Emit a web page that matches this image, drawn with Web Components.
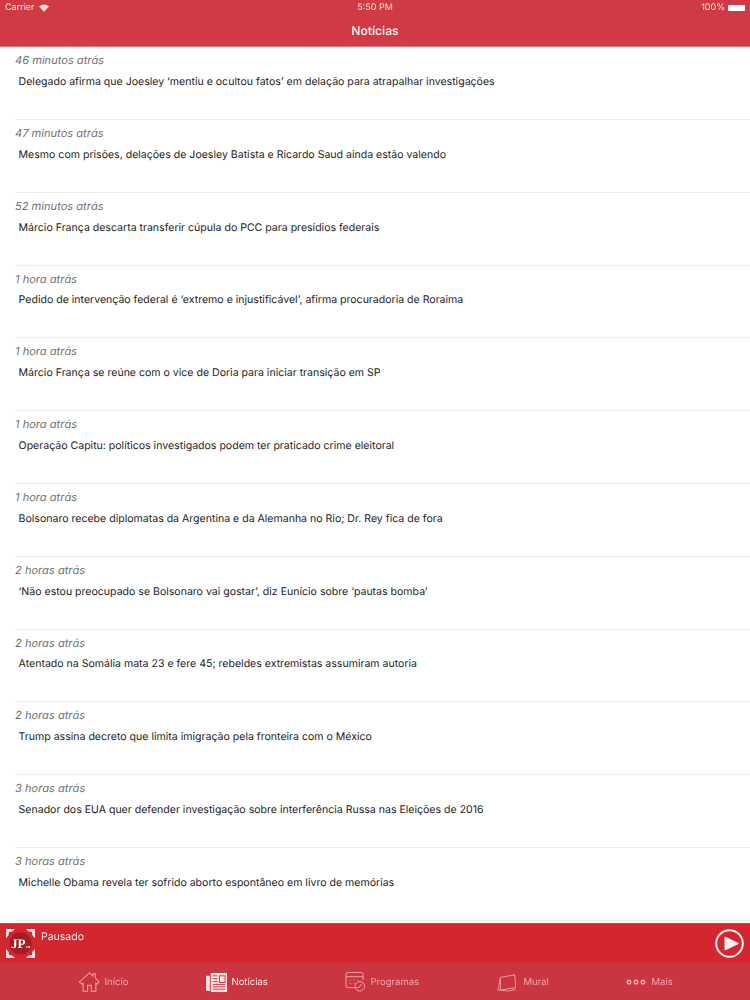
<!DOCTYPE html>
<html lang="pt">
<head>
<meta charset="utf-8">
<title>Notícias</title>
<style>
html, body { margin: 0; padding: 0; height: 100%; }
body { font-family: "Inter", "Liberation Sans", sans-serif; background: #fff; overflow: hidden; text-rendering: geometricPrecision; }
app-shell { height: 1000px; }
</style>
</head>
<body>
<app-shell>
  <top-bar slot="top" title="Notícias"></top-bar>
  <news-list slot="main">
    <news-row time="46 minutos atrás">Delegado afirma que Joesley ‘mentiu e ocultou fatos’ em delação para atrapalhar investigações</news-row>
    <news-row time="47 minutos atrás">Mesmo com prisões, delações de Joesley Batista e Ricardo Saud ainda estão valendo</news-row>
    <news-row time="52 minutos atrás">Márcio França descarta transferir cúpula do PCC para presídios federais</news-row>
    <news-row time="1 hora atrás">Pedido de intervenção federal é ‘extremo e injustificável’, afirma procuradoria de Roraima</news-row>
    <news-row time="1 hora atrás">Márcio França se reúne com o vice de Doria para iniciar transição em SP</news-row>
    <news-row time="1 hora atrás">Operação Capitu: políticos investigados podem ter praticado crime eleitoral</news-row>
    <news-row time="1 hora atrás">Bolsonaro recebe diplomatas da Argentina e da Alemanha no Rio; Dr. Rey fica de fora</news-row>
    <news-row time="2 horas atrás">‘Não estou preocupado se Bolsonaro vai gostar’, diz Eunício sobre ‘pautas bomba’</news-row>
    <news-row time="2 horas atrás">Atentado na Somália mata 23 e fere 45; rebeldes extremistas assumiram autoria</news-row>
    <news-row time="2 horas atrás">Trump assina decreto que limita imigração pela fronteira com o México</news-row>
    <news-row time="3 horas atrás">Senador dos EUA quer defender investigação sobre interferência Russa nas Eleições de 2016</news-row>
    <news-row time="3 horas atrás">Michelle Obama revela ter sofrido aborto espontâneo em livro de memórias</news-row>
  </news-list>
  <audio-player slot="bottom" status="Pausado"></audio-player>
  <tab-bar slot="bottom">
    <tab-item label="Início" icon="home"></tab-item>
    <tab-item label="Notícias" icon="news" active></tab-item>
    <tab-item label="Programas" icon="shows"></tab-item>
    <tab-item label="Mural" icon="board"></tab-item>
    <tab-item label="Mais" icon="more"></tab-item>
  </tab-bar>
</app-shell>

<script>
class AppShell extends HTMLElement {
    constructor() {
        super();
        this.attachShadow({ mode: 'open' });
        this.shadowRoot.innerHTML = `
        <style>
            :host { display: flex; flex-direction: column; width: 750px; filter: blur(0.35px); }
            main { flex: 1; min-height: 0; overflow: hidden; }
        </style>
        <slot name="top"></slot>
        <main><slot name="main"></slot></main>
        <slot name="bottom"></slot>
        `;
    }
}

class TopBar extends HTMLElement {
    constructor() {
        super();
        this.attachShadow({ mode: 'open' });
        this.shadowRoot.innerHTML = `
        <style>
            :host { display: block; height: 47px; background: #cf3a44; color: #fff; box-sizing: border-box; border-bottom: 1px solid #e5797f; }
            .status { height: 15px; padding: 0 5px; display: grid; grid-template-columns: 1fr auto 1fr; align-items: center; font-size: 9px; color: #f6dcde; }
            .left { display: flex; align-items: center; gap: 4px; }
            .right { display: flex; align-items: center; justify-content: flex-end; gap: 3px; }
            .battery { width: 17px; height: 6px; background: #fff; border-radius: 1px; }
            h1 { margin: 0; padding-top: 1px; text-align: center; font-size: 12px; line-height: 30px; font-weight: 600; color: #f9e9ea; }
        </style>
        <div class="status">
            <div class="left">Carrier
                <svg width="10" height="8" viewBox="0 0 11 8"><path d="M5.500 8 0 2.400C3.200-.6 7.800-.6 11 2.400z" fill="#f6dcde"/></svg>
            </div>
            <div>5:50 PM</div>
            <div class="right">100% <span class="battery"></span></div>
        </div>
        <h1>${this.getAttribute('title')}</h1>
        `;
    }
}

class NewsList extends HTMLElement {
    constructor() {
        super();
        this.attachShadow({ mode: 'open' });
        this.shadowRoot.innerHTML = `
        <style>:host { display: block; background: #fff; padding-top: 0.3px; }</style>
        <slot></slot>
        `;
    }
}

class NewsRow extends HTMLElement {
    constructor() {
        super();
        this.attachShadow({ mode: 'open' });
        this.shadowRoot.innerHTML = `
        <style>
            :host { display: block; height: 72.8px; box-sizing: border-box; padding: 6px 0 0 15px; }
            .inner { height: 66.800px; box-sizing: border-box; border-bottom: 1px solid #ececec; }
            .time { font-size: 11.100px; line-height: 14px; font-style: italic; color: #6f6f6f; }
            .title { margin: 6.700px 0 0 3.600px; font-size: 10.560px; line-height: 15px; color: #1c1c1c; white-space: nowrap; }
        </style>
        <div class="inner">
            <div class="time">${this.getAttribute('time')}</div>
            <div class="title"><slot></slot></div>
        </div>
        `;
    }
}

class AudioPlayer extends HTMLElement {
    constructor() {
        super();
        this.attachShadow({ mode: 'open' });
        this.shadowRoot.innerHTML = `
        <style>
            :host { display: flex; height: 40px; box-sizing: border-box; background: #d3262f; color: #fbe9ea; border-top: 1px solid #c9464e; padding: 5px 6px 0 6px; }
            .logo { width: 29px; height: 29px; flex: none; }
            .status { margin-left: 6px; font-size: 10.500px; line-height: 13px; flex: 1; padding-top: 1px; }
            .play { width: 29px; height: 29px; flex: none; }
        </style>
        <svg class="logo" viewBox="0 0 29 29">
            <path d="M0 0h9L6.500 2.500 3 3l-.5 3.500L0 9zM29 0h-9l2.500 2.500 3.500.5.5 3.500L29 9zM0 29h9l-2.500-2.500L3 26l-.5-3.500L0 20zM29 29h-9l2.500-2.500 3.500-.5.5-3.500L29 20z" fill="#f7e4e4"/>
            <circle cx="14.500" cy="14.500" r="11" fill="#a81c24"/>
            <text x="5" y="19" font-family="Liberation Serif, serif" font-weight="700" font-size="13" fill="#fff">JP</text>
            <text x="19.800" y="19" font-family="Liberation Sans, sans-serif" font-weight="700" font-size="3" fill="#fff">FM</text>
        </svg>
        <div class="status">${this.getAttribute('status')}</div>
        <svg class="play" viewBox="0 0 29 29">
            <circle cx="14.500" cy="14.500" r="13.300" fill="none" stroke="#fbeeee" stroke-width="2"/>
            <path d="M10 8 23.500 14.500 10 21z" fill="#fbeeee" stroke="#fbeeee" stroke-linejoin="round"/>
        </svg>
        `;
    }
}

class TabBar extends HTMLElement {
    constructor() {
        super();
        this.attachShadow({ mode: 'open' });
        this.shadowRoot.innerHTML = `
        <style>
            :host { display: grid; grid-template-columns: 128px 139px 152px 129px 1fr; height: 37px; background: #c93641; padding-left: 78px; box-sizing: border-box; }
        </style>
        <slot></slot>
        `;
    }
}

const TAB_ICONS = {
    home: `<svg width="22" height="24" viewBox="0 0 24 24" fill="none" stroke="currentColor" stroke-width="1.100"><path d="M1.500 12 12.500 2l4 3.600V3h2.500v4.800L23 12l-2.500 2.200-1-1V22h-5v-6.500h-4V22h-5v-8.800l-1.500 1z"/></svg>`,
    news: `<svg width="21" height="21" viewBox="0 0 22 22"><path d="M0 4h4v16H2a2 2 0 0 1-2-2z" fill="currentColor"/><rect x="5" y="1" width="17" height="20" fill="currentColor"/><path d="M7 4h5M7 7h5M7 10h5M7 13h13M7 15.500h13M7 18h13" stroke="#c93641"/><rect x="14" y="4" width="6" height="7" fill="none" stroke="#c93641"/></svg>`,
    shows: `<svg width="21" height="22" viewBox="0 0 22 22" fill="none" stroke="currentColor"><path d="M13 17H3a2 2 0 0 1-2-2V3a2 2 0 0 1 2-2h14a2 2 0 0 1 2 2v6"/><path d="M1 5.500h18M5 9h1M9 9h1M13 9h1M5 12.500h1M9 12.500h1"/><circle cx="15.500" cy="15.500" r="5"/><path d="M17.500 12.800 15.500 16l-2 1"/></svg>`,
    board: `<svg width="22" height="19" viewBox="0 0 26 22" fill="none" stroke="currentColor"><path d="M4 5 21 2l1 15-18 3z"/><path d="M4 6 1 20l13 1 8-2M19 1l2 3"/></svg>`,
    more: `<svg width="21" height="8" viewBox="0 0 21 8" fill="none" stroke="currentColor" stroke-width="1.500"><circle cx="3" cy="4" r="1.800"/><circle cx="10" cy="4" r="1.800"/><circle cx="17" cy="4" r="1.800"/></svg>`
};

class TabItem extends HTMLElement {
    constructor() {
        super();
        this.attachShadow({ mode: 'open' });
        this.shadowRoot.innerHTML = `
        <style>
            :host { display: flex; align-items: center; gap: 4.500px; height: 37px; padding-top: 1px; box-sizing: border-box; font-size: 9.500px; color: #f1a5a9; }
            :host([active]) { color: #fbe3e4; }
            svg { display: block; flex: none; }
        </style>
        ${TAB_ICONS[this.getAttribute('icon')]}
        <span>${this.getAttribute('label')}</span>
        `;
    }
}

customElements.define('app-shell', AppShell);
customElements.define('top-bar', TopBar);
customElements.define('news-list', NewsList);
customElements.define('news-row', NewsRow);
customElements.define('audio-player', AudioPlayer);
customElements.define('tab-bar', TabBar);
customElements.define('tab-item', TabItem);
</script>
</body>
</html>
